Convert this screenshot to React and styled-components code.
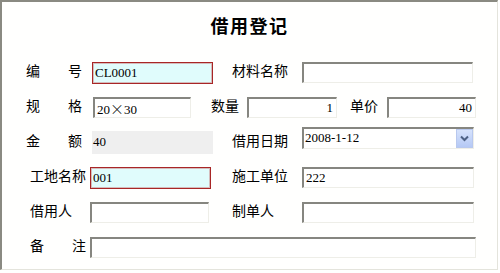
import React from "react";
import styled, { createGlobalStyle, css } from "styled-components";

const Global = createGlobalStyle`
  html, body { margin: 0; padding: 0; background: #ffffff; }
  body { width: 500px; height: 273px; overflow: hidden; }
  * { box-sizing: border-box; }
`;

const Frame = styled.div`
  width: 498px;
  height: 270px;
  background: #fffffe;
  border-top: 2px solid #8a8a82;
  border-left: 2px solid #8a8a82;
  border-right: 1px solid #e4e4dc;
  border-bottom: 1px solid #e4e4dc;
  font-family: "Noto Sans CJK SC", "Noto Sans", sans-serif;
  color: #000;
`;

const Title = styled.h1`
  margin: 0;
  padding-top: 11px;
  height: 60px;
  text-align: center;
  font-size: 18px;
  line-height: 24px;
  font-weight: 700;
  letter-spacing: 1.5px;
`;

const Form = styled.div`
  display: flex;
  flex-direction: column;
  gap: 13px;
`;

const Row = styled.div`
  display: flex;
  align-items: flex-start;
  height: 22px;
  padding-left: ${(p) => p.$pl}px;
`;

const Label = styled.div`
  width: ${(p) => p.$w}px;
  margin-left: ${(p) => p.$ml || 0}px;
  font-size: 14px;
  line-height: 16px;
  flex: none;
  white-space: nowrap;
  display: flex;
  justify-content: ${(p) => (p.$spread ? "space-between" : "flex-start")};
`;

const fieldText = css`
  font-family: "Liberation Serif", "Noto Sans CJK SC", serif;
  font-size: 13px;
  color: #000;
`;

const Field = styled.div`
  ${fieldText};
  flex: none;
  width: ${(p) => p.$w}px;
  height: ${(p) => p.$h || 21}px;
  margin-left: ${(p) => p.$ml || 0}px;
  padding: 0 3px 0 2px;
  line-height: ${(p) => (p.$focus ? 20 : 18)}px;
  white-space: nowrap;
  overflow: hidden;
  text-align: ${(p) => (p.$right ? "right" : "left")};
  ${(p) =>
    p.$focus
      ? css`
          background: #e0fcfc;
          border: 1px solid #a82626;
          box-shadow: inset 0 0 0 1px rgba(190, 70, 70, 0.35);
        `
      : css`
          background: #ffffff;
          border-top: 2px solid #868680;
          border-left: 2px solid #868680;
          border-right: 1px solid #eeeee8;
          border-bottom: 1px solid #eeeee8;
        `}
`;

const Wide = styled.span`
  font-family: "Noto Sans CJK SC", sans-serif;
  font-size: 14px;
  font-weight: 300;
`;

const Static = styled.div`
  ${fieldText};
  flex: none;
  width: ${(p) => p.$w}px;
  height: 23px;
  margin: -1px 0 0 ${(p) => p.$ml || 0}px;
  padding: 2px 0 0 1px;
  background: #efefef;
  line-height: 18px;
`;

const DateBox = styled.div`
  flex: none;
  display: flex;
  align-items: stretch;
  width: ${(p) => p.$w}px;
  height: 22px;
  margin: -5px 0 0 ${(p) => p.$ml || 0}px;
  background: #fff;
  border-top: 2px solid #868680;
  border-left: 2px solid #868680;
  border-right: 1px solid #eeeee8;
  border-bottom: 1px solid #eeeee8;
`;

const DateText = styled.div`
  ${fieldText};
  flex: 1;
  padding-left: 1px;
  line-height: 18px;
`;

const DropButton = styled.div`
  width: 17px;
  margin: 0 0 0 1px;
  background: linear-gradient(#d6e2fc, #b5c9f5);
  border: 1px solid #b8c8ee;
  display: flex;
  align-items: center;
  justify-content: center;
`;

const Chevron = () => (
  <svg width="9" height="7" viewBox="0 0 9 7">
    <path d="M1 1.5 L4.5 5 L8 1.5" fill="none" stroke="#4d6185" strokeWidth="2" />
  </svg>
);

export default function App() {
  return (
    <>
      <Global />
      <Frame>
        <Title>借用登记</Title>
        <Form>
          <Row $pl={24}>
            <Label $w={56} $spread>
              <span>编</span>
              <span>号</span>
            </Label>
            <Field $ml={10} $w={121} $h={22} $focus>CL0001</Field>
            <Label $ml={19} $w={56}>材料名称</Label>
            <Field $ml={14} $w={171} />
          </Row>
          <Row $pl={24}>
            <Label $w={56} $spread>
              <span>规</span>
              <span>格</span>
            </Label>
            <Field $ml={11} $w={98}>
              20<Wide>×</Wide>30
            </Field>
            <Label $ml={20} $w={28}>数量</Label>
            <Field $ml={8} $w={90} $right>1</Field>
            <Label $ml={13} $w={28}>单价</Label>
            <Field $ml={9} $w={89} $right>40</Field>
          </Row>
          <Row $pl={24}>
            <Label $w={56} $spread>
              <span>金</span>
              <span>额</span>
            </Label>
            <Static $ml={10} $w={121}>40</Static>
            <Label $ml={19} $w={56}>借用日期</Label>
            <DateBox $ml={14} $w={172}>
              <DateText>2008-1-12</DateText>
              <DropButton>
                <Chevron />
              </DropButton>
            </DateBox>
          </Row>
          <Row $pl={28}>
            <Label $w={56}>工地名称</Label>
            <Field $ml={4} $w={121} $h={22} $focus>001</Field>
            <Label $ml={21} $w={56}>施工单位</Label>
            <Field $ml={14} $w={172}>222</Field>
          </Row>
          <Row $pl={28}>
            <Label $w={42}>借用人</Label>
            <Field $ml={18} $w={119} />
            <Label $ml={23} $w={42}>制单人</Label>
            <Field $ml={28} $w={172} />
          </Row>
          <Row $pl={28}>
            <Label $w={56} $spread>
              <span>备</span>
              <span>注</span>
            </Label>
            <Field $ml={4} $w={386} />
          </Row>
        </Form>
      </Frame>
    </>
  );
}
